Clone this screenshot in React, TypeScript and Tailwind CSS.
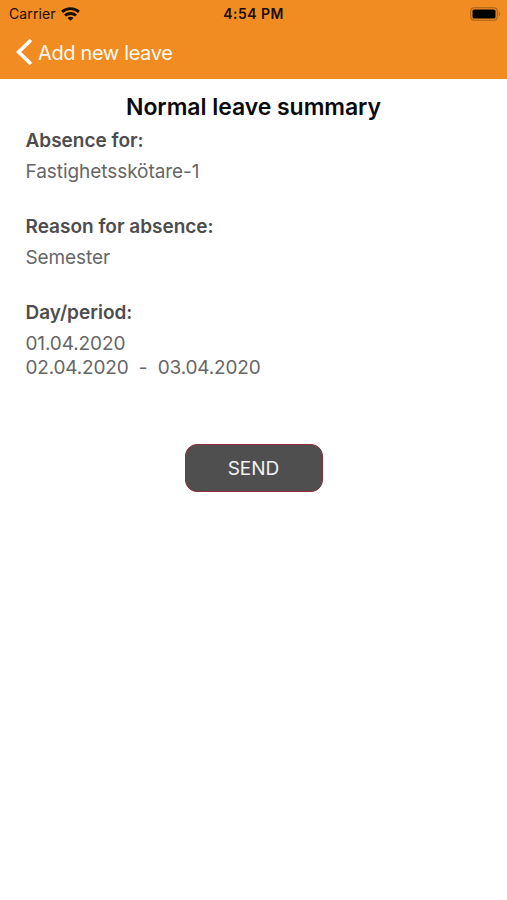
const sections = [
  {
    title: "Absence for:",
    lines: [{ text: "Fastighetsskötare-1", style: "tracking-[-0.06px]" }],
  },
  {
    title: "Reason for absence:",
    lines: [{ text: "Semester", style: "tracking-[-0.1px]" }],
  },
  {
    title: "Day/period:",
    lines: [
      { text: "01.04.2020", style: "tracking-[-0.12px]" },
      { text: "02.04.2020  -  03.04.2020", style: "tracking-[-0.18px]" },
    ],
  },
];

const WifiIcon = () => (
  <svg width="19" height="15" viewBox="0 0 19 15" fill="none" stroke="#190d02" strokeWidth="2.8">
    <path d="M1.1 4.9C5.8 0.6 13.2 0.6 17.9 4.9" />
    <path d="M4 8.5C7 5.8 12 5.8 15 8.5" />
    <path d="M9.5 13.8L6.5 10.9C8.2 9.4 10.8 9.4 12.5 10.9Z" fill="#190d02" stroke="none" />
  </svg>
);

const BatteryIcon = () => (
  <svg width="31" height="14" viewBox="0 0 31 14" fill="none">
    <rect x="0.75" y="0.75" width="26.5" height="12.5" rx="3.5" stroke="#a8611b" strokeWidth="1.1" />
    <rect x="2.5" y="2.5" width="23" height="9" rx="1.6" fill="#000" />
    <path d="M28.8 4.8C30.6 5.6 30.6 8.4 28.8 9.2Z" fill="#a8611b" />
  </svg>
);

const StatusBar = () => (
  <div className="grid h-7 grid-cols-3 items-center px-[9px] text-[#190d02]">
    <div className="flex items-center gap-[5px]">
      <span className="text-[14px] leading-7 tracking-[0.12px]">Carrier</span>
      <WifiIcon />
    </div>
    <span className="text-center text-[14px] font-semibold leading-7 tracking-[0.45px]">4:54 PM</span>
    <div className="-mr-[3px] flex justify-end">
      <BatteryIcon />
    </div>
  </div>
);

const Header = () => (
  <header className="h-[79px] bg-[#f08c22]">
    <StatusBar />
    <button className="flex h-12 items-center gap-[5px] pl-4 text-[#fff8ee]">
      <svg width="17" height="28" viewBox="0 0 17 28" fill="none" stroke="#fff" strokeWidth="3.6">
        <path d="M15 2L2.6 14L15 26" />
      </svg>
      <span className="pt-px text-[20px] leading-6 tracking-[-0.36px]">Add new leave</span>
    </button>
  </header>
);

export default function App() {
  return (
    <div className="h-[900px] w-full overflow-hidden bg-white font-['Inter',sans-serif]">
      <Header />
      <main className="flex flex-col pt-[13px]">
        <h1 className="text-center text-[23px] font-semibold leading-[30px] tracking-[-0.05px] text-[#0a0a0a]">
          Normal leave summary
        </h1>

        <div className="flex flex-col gap-[32px] px-[25.5px] pt-[7px] text-[19px] leading-[23.1px] text-[#666]">
          {sections.map((section) => (
            <section key={section.title}>
              <h2 className="mb-[8px] font-semibold text-[#4d4d4d]">{section.title}</h2>
              {section.lines.map((line) => (
                <p key={line.text} className={`whitespace-pre ${line.style}`}>
                  {line.text}
                </p>
              ))}
            </section>
          ))}
        </div>

        <button className="mt-[65.3px] h-[48px] w-[138px] self-center rounded-[12px] border border-[#8f2f3a] bg-[#4f4f4f] pt-[2px] text-[19px] text-[#f2f2f2]">
          SEND
        </button>
      </main>
    </div>
  );
}
